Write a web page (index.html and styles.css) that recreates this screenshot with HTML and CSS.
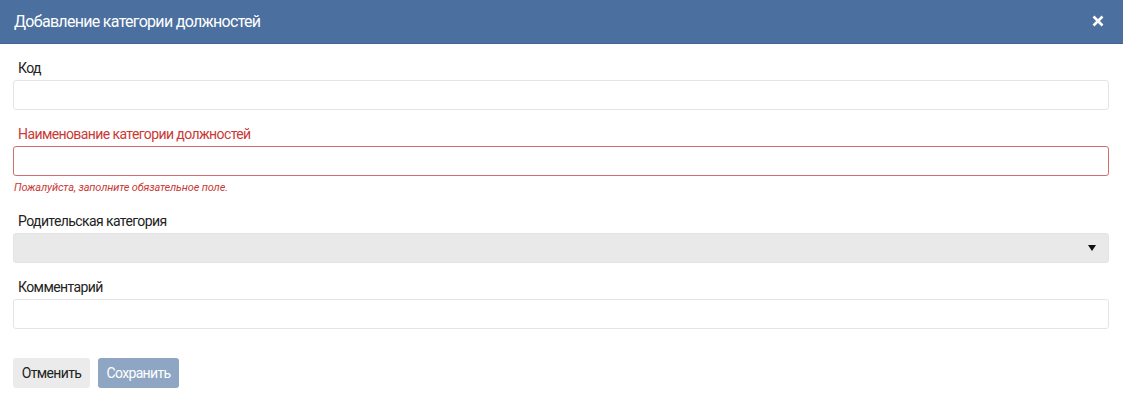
FILE: index.html
```html
<!DOCTYPE html>
<html lang="ru">
<head>
<meta charset="utf-8">
<link rel="stylesheet" href="styles.css">
</head>
<body>
<div class="dialog">
  <div class="header">
    <span class="title">Добавление категории должностей</span>
    <svg class="close" width="12" height="12" viewBox="0 0 12 12"><path d="M1.5 1.5L10.5 10.5M10.5 1.5L1.5 10.5" stroke="#fff" stroke-width="2.6" stroke-linecap="butt"/></svg>
  </div>
  <div class="body">
    <div class="group">
      <label class="label">Код</label>
      <div class="input"></div>
    </div>
    <div class="group">
      <label class="label error">Наименование категории должностей</label>
      <div class="input invalid"></div>
      <div class="error-text">Пожалуйста, заполните обязательное поле.</div>
    </div>
    <div class="group">
      <label class="label">Родительская категория</label>
      <div class="input select"><span class="caret"></span></div>
    </div>
    <div class="group">
      <label class="label">Комментарий</label>
      <div class="input"></div>
    </div>
    <div class="actions">
      <button class="btn btn-cancel">Отменить</button>
      <button class="btn btn-save">Сохранить</button>
    </div>
  </div>
</div>
</body>
</html>
```
FILE: styles.css
```css
* { box-sizing: border-box; }
html, body { margin: 0; padding: 0; background: #fff; }
body { font-family: Roboto, "Liberation Sans", sans-serif; color: #333; }
.header {
  height: 44px;
  background: #4b6f9f;
  border-bottom: 1px solid #44648f;
  display: flex;
  align-items: center;
  justify-content: space-between;
  padding: 0 19px 0 14px;
  color: #fff;
}
.title { font-size: 16px; letter-spacing: -0.7px; }
.close { display: block; margin-top: -1px; }
.body { padding: 14px 14px 0 13px; }
.group { margin-bottom: 14px; }
.label {
  display: block;
  font-size: 14px;
  line-height: 20px;
  padding-left: 5px;
  margin-bottom: 2px;
  color: #222;
  letter-spacing: -0.6px;
}
.label.error { color: #c93a36; }
.input {
  height: 30px;
  border: 1px solid #e4e4e4;
  border-radius: 3px;
  background: #fff;
}
.input.invalid { border-color: #d0706e; }
.error-text {
  font-size: 11px;
  font-style: italic;
  color: #c93a36;
  line-height: 14px;
  margin-top: 5px;
  padding-left: 1px;
  margin-bottom: 16px;
  letter-spacing: -0.15px;
}
.select {
  background: #e9e9e9;
  border-color: #e4e4e4;
  display: flex;
  align-items: center;
  justify-content: flex-end;
  padding-right: 12px;
}
.caret {
  width: 0; height: 0;
  border-left: 4px solid transparent;
  border-right: 4px solid transparent;
  border-top: 6px solid #111;
}
.actions { display: flex; gap: 8px; margin-top: 29px; }
.btn {
  height: 30px;
  border: none;
  border-radius: 3px;
  font-family: Roboto, "Liberation Sans", sans-serif;
  font-size: 14px;
  letter-spacing: -0.65px;
  padding: 0;
}
.btn-cancel { background: #ebebeb; color: #222; width: 77px; }
.btn-save { background: #8ea6c3; color: #fff; width: 81px; }
```
